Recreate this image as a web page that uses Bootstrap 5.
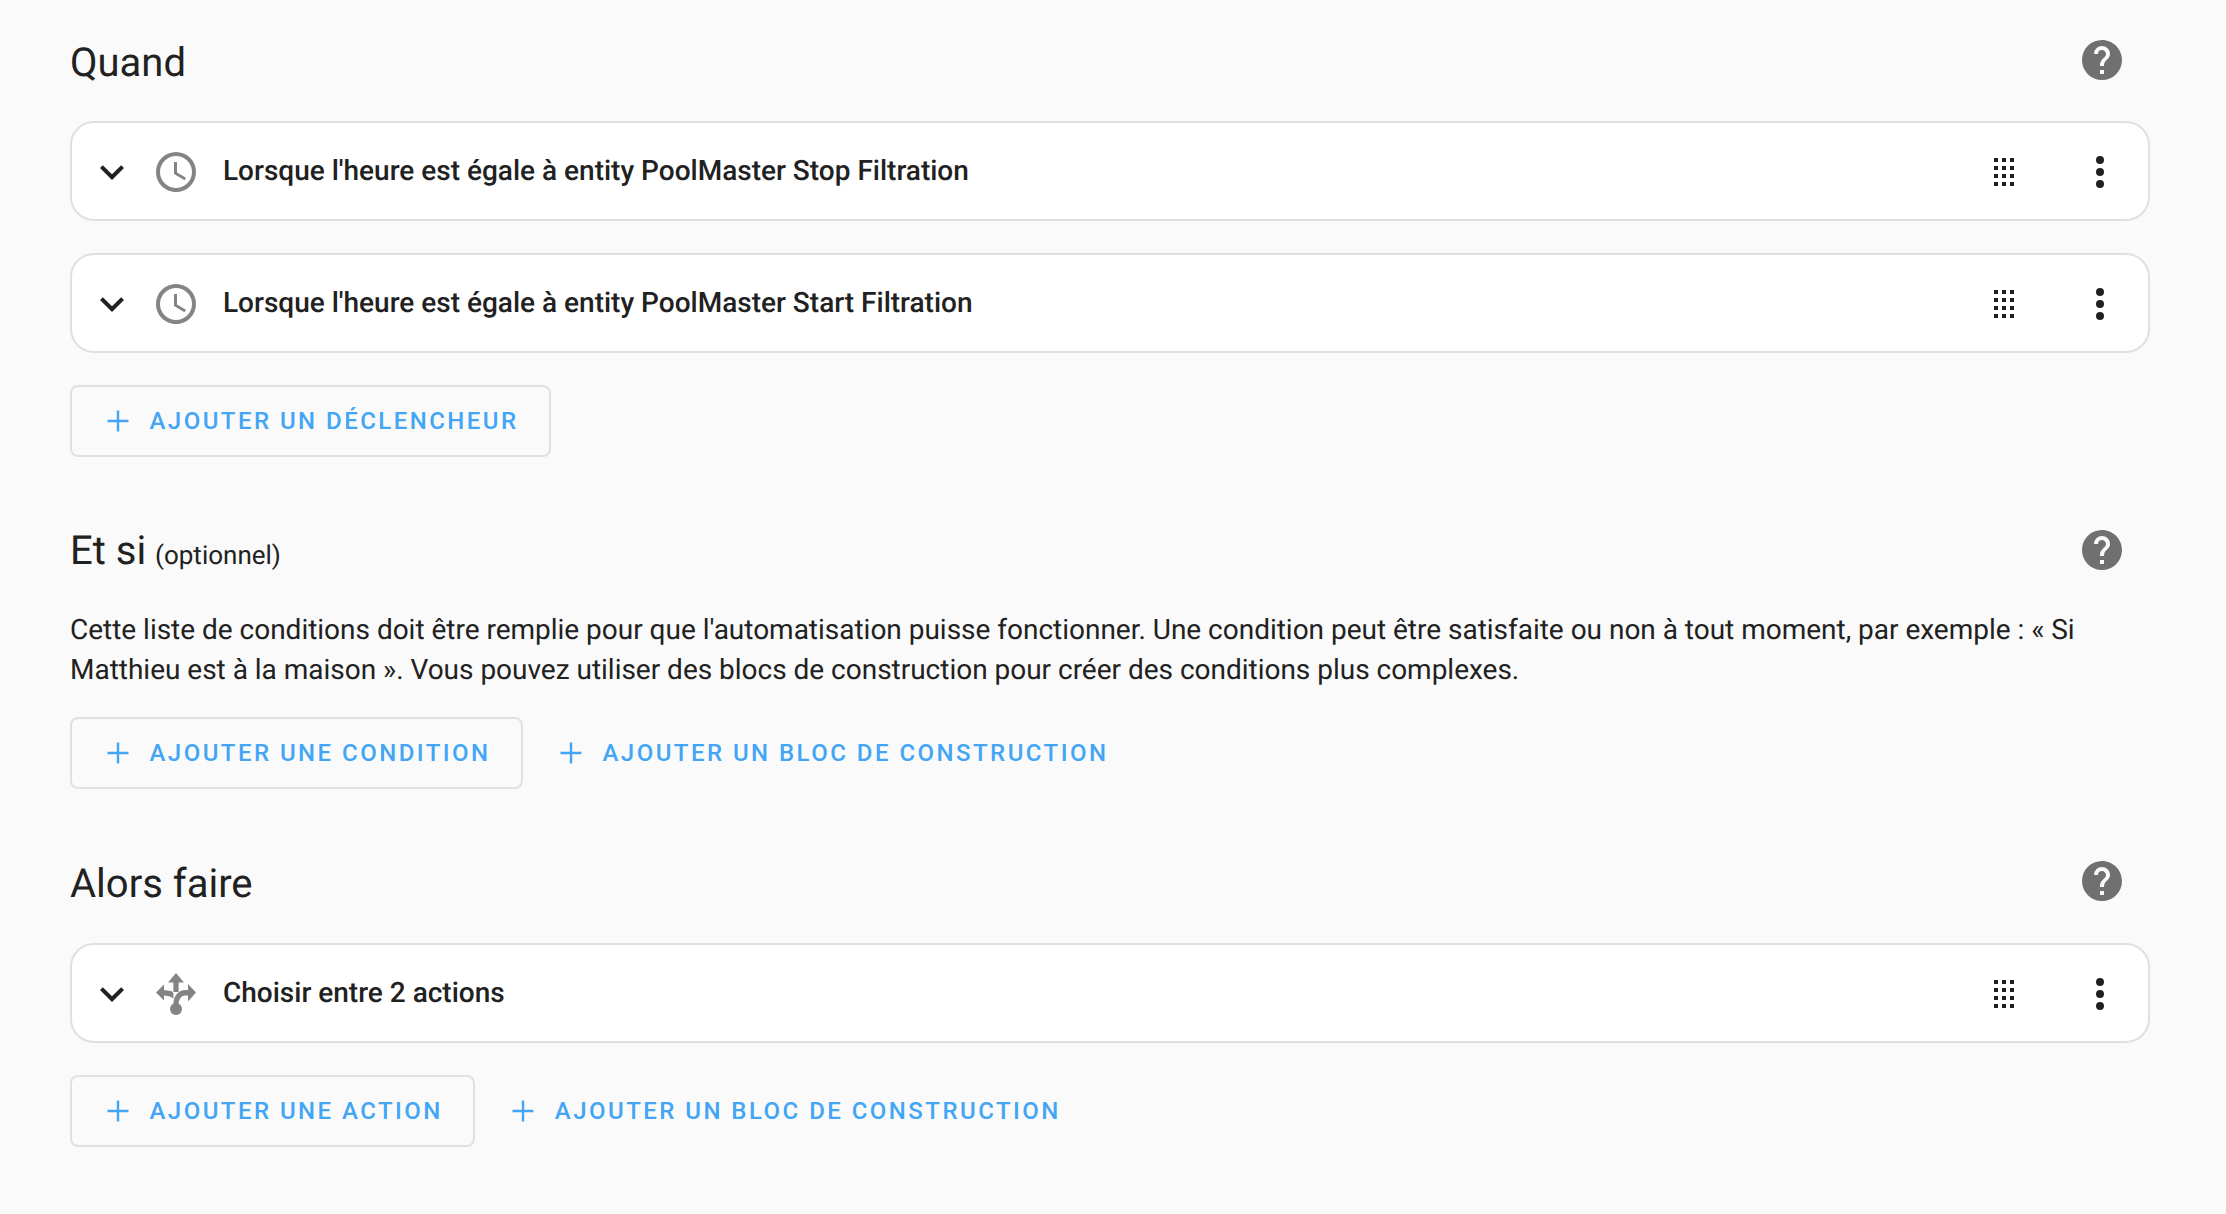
<!DOCTYPE html>
<html lang="fr">
<head>
<meta charset="utf-8">
<title>Automatisation</title>
<link href="https://cdn.jsdelivr.net/npm/bootstrap@5.3.0/dist/css/bootstrap.min.css" rel="stylesheet">
<style>
html, body { height: 100%; }
body { background: #fafafa; color: #212121; font-family: Roboto, "Liberation Sans", sans-serif; overflow: hidden; text-rendering: geometricPrecision; }
.page-wrap { padding: 28px 76px 0 70px; }
.sec-head { height: 64px; padding-right: 24px; }
.sec-title { font-size: 40px; font-weight: 400; line-height: 64px; margin: 6px 0 0; color: #212121; }
.sec-title small { font-size: 26px; font-weight: 400; margin-left: -1px; }
.ico { width: 48px; height: 48px; fill: currentColor; flex: none; display: block; }
.ico-help { color: #707070; }
.ico-grey { color: #848484; }
.auto-card { height: 100px; margin-top: 29px; border: 2px solid #e0e0e0; border-radius: 24px; background: #fff; box-shadow: none; padding: 0 24px 0 16px; }
.auto-card + .auto-card { margin-top: 32px; }
.auto-card .ico { margin-top: 2px; }
.auto-card .row-label { font-size: 28px; font-weight: 500; line-height: 40px; color: #212121; margin-left: 23px; }
.auto-card .ico-state { margin-left: 16px; }
.auto-card .ico-drag { margin-right: 48px; }
.btn-row { margin-top: 32px; gap: 0; }
.act-btn { height: 72px; font-family: inherit; font-size: 24px; font-weight: 500; letter-spacing: 2.46px; color: #42a5f5; text-transform: uppercase; display: inline-flex; align-items: center; background: transparent; border-radius: 8px; line-height: 1; }
.act-btn:hover, .act-btn:active { color: #42a5f5; }
.act-btn svg { width: 36px; height: 36px; fill: currentColor; margin-right: 13.5px; margin-left: 1px; flex: none; }
.act-outline { border: 2px solid #e0e0e0; padding: 0 30.5px 0 27px; }
.act-text { border: 2px solid transparent; padding: 0 30px 0 27px; }
.desc { font-size: 28px; line-height: 40px; margin: 28px 0 0; color: #212121; letter-spacing: -0.015px; }
.gap-sec-2 { margin-top: 61px; }
.gap-sec-3 { margin-top: 60px; }
.gap-sec-3 .auto-card { margin-top: 30px; }
.desc + .btn-row { margin-top: 27px; }
</style>
</head>
<body>
<main class="page-wrap">

  <section>
    <div class="sec-head d-flex align-items-center justify-content-between">
      <h1 class="sec-title">Quand</h1>
      <svg class="ico ico-help" viewBox="0 0 24 24"><path d="M15.07,11.25L14.17,12.17C13.45,12.89 13,13.5 13,15H11V14.5C11,13.39 11.45,12.39 12.17,11.67L13.41,10.41C13.78,10.05 14,9.55 14,9C14,7.89 13.1,7 12,7A2,2 0 0,0 10,9H8A4,4 0 0,1 12,5A4,4 0 0,1 16,9C16,9.88 15.64,10.67 15.07,11.25M13,19H11V17H13M12,2A10,10 0 0,0 2,12A10,10 0 0,0 12,22A10,10 0 0,0 22,12C22,6.47 17.5,2 12,2Z"/></svg>
    </div>
    <div class="card auto-card flex-row align-items-center">
      <svg class="ico" viewBox="0 0 24 24"><path d="M7.41,8.58L12,13.17L16.59,8.58L18,10L12,16L6,10L7.41,8.58Z"/></svg>
      <svg class="ico ico-grey ico-state" viewBox="0 0 24 24"><path d="M12,20A8,8 0 0,0 20,12A8,8 0 0,0 12,4A8,8 0 0,0 4,12A8,8 0 0,0 12,20M12,2A10,10 0 0,1 22,12A10,10 0 0,1 12,22C6.47,22 2,17.5 2,12A10,10 0 0,1 12,2M12.5,7V12.25L17,14.92L16.25,16.15L11,13V7H12.5Z"/></svg>
      <div class="row-label flex-grow-1">Lorsque l'heure est égale à entity PoolMaster Stop Filtration</div>
      <svg class="ico ico-drag" viewBox="0 0 24 24"><path d="M7,19V17H9V19H7M11,19V17H13V19H11M15,19V17H17V19H15M7,15V13H9V15H7M11,15V13H13V15H11M15,15V13H17V15H15M7,11V9H9V11H7M11,11V9H13V11H11M15,11V9H17V11H15M7,7V5H9V7H7M11,7V5H13V7H11M15,7V5H17V7H15Z"/></svg>
      <svg class="ico" viewBox="0 0 24 24"><path d="M12,16A2,2 0 0,1 14,18A2,2 0 0,1 12,20A2,2 0 0,1 10,18A2,2 0 0,1 12,16M12,10A2,2 0 0,1 14,12A2,2 0 0,1 12,14A2,2 0 0,1 10,12A2,2 0 0,1 12,10M12,4A2,2 0 0,1 14,6A2,2 0 0,1 12,8A2,2 0 0,1 10,6A2,2 0 0,1 12,4Z"/></svg>
    </div>
    <div class="card auto-card flex-row align-items-center">
      <svg class="ico" viewBox="0 0 24 24"><path d="M7.41,8.58L12,13.17L16.59,8.58L18,10L12,16L6,10L7.41,8.58Z"/></svg>
      <svg class="ico ico-grey ico-state" viewBox="0 0 24 24"><path d="M12,20A8,8 0 0,0 20,12A8,8 0 0,0 12,4A8,8 0 0,0 4,12A8,8 0 0,0 12,20M12,2A10,10 0 0,1 22,12A10,10 0 0,1 12,22C6.47,22 2,17.5 2,12A10,10 0 0,1 12,2M12.5,7V12.25L17,14.92L16.25,16.15L11,13V7H12.5Z"/></svg>
      <div class="row-label flex-grow-1">Lorsque l'heure est égale à entity PoolMaster Start Filtration</div>
      <svg class="ico ico-drag" viewBox="0 0 24 24"><path d="M7,19V17H9V19H7M11,19V17H13V19H11M15,19V17H17V19H15M7,15V13H9V15H7M11,15V13H13V15H11M15,15V13H17V15H15M7,11V9H9V11H7M11,11V9H13V11H11M15,11V9H17V11H15M7,7V5H9V7H7M11,7V5H13V7H11M15,7V5H17V7H15Z"/></svg>
      <svg class="ico" viewBox="0 0 24 24"><path d="M12,16A2,2 0 0,1 14,18A2,2 0 0,1 12,20A2,2 0 0,1 10,18A2,2 0 0,1 12,16M12,10A2,2 0 0,1 14,12A2,2 0 0,1 12,14A2,2 0 0,1 10,12A2,2 0 0,1 12,10M12,4A2,2 0 0,1 14,6A2,2 0 0,1 12,8A2,2 0 0,1 10,6A2,2 0 0,1 12,4Z"/></svg>
    </div>
    <div class="btn-row d-flex">
      <button type="button" class="btn act-btn act-outline"><svg viewBox="0 0 24 24"><path d="M19,12.8H12.8V19H11.2V12.8H5V11.2H11.2V5H12.8V11.2H19V12.8Z"/></svg>Ajouter un déclencheur</button>
    </div>
  </section>

  <section class="gap-sec-2">
    <div class="sec-head d-flex align-items-center justify-content-between">
      <h1 class="sec-title">Et si <small>(optionnel)</small></h1>
      <svg class="ico ico-help" viewBox="0 0 24 24"><path d="M15.07,11.25L14.17,12.17C13.45,12.89 13,13.5 13,15H11V14.5C11,13.39 11.45,12.39 12.17,11.67L13.41,10.41C13.78,10.05 14,9.55 14,9C14,7.89 13.1,7 12,7A2,2 0 0,0 10,9H8A4,4 0 0,1 12,5A4,4 0 0,1 16,9C16,9.88 15.64,10.67 15.07,11.25M13,19H11V17H13M12,2A10,10 0 0,0 2,12A10,10 0 0,0 12,22A10,10 0 0,0 22,12C22,6.47 17.5,2 12,2Z"/></svg>
    </div>
    <p class="desc">Cette liste de conditions doit être remplie pour que l'automatisation puisse fonctionner. Une condition peut être satisfaite ou non à tout moment, par exemple : « Si Matthieu est à la maison ». Vous pouvez utiliser des blocs de construction pour créer des conditions plus complexes.</p>
    <div class="btn-row d-flex">
      <button type="button" class="btn act-btn act-outline"><svg viewBox="0 0 24 24"><path d="M19,12.8H12.8V19H11.2V12.8H5V11.2H11.2V5H12.8V11.2H19V12.8Z"/></svg>Ajouter une condition</button>
      <button type="button" class="btn act-btn act-text"><svg viewBox="0 0 24 24"><path d="M19,12.8H12.8V19H11.2V12.8H5V11.2H11.2V5H12.8V11.2H19V12.8Z"/></svg>Ajouter un bloc de construction</button>
    </div>
  </section>

  <section class="gap-sec-3">
    <div class="sec-head d-flex align-items-center justify-content-between">
      <h1 class="sec-title">Alors faire</h1>
      <svg class="ico ico-help" viewBox="0 0 24 24"><path d="M15.07,11.25L14.17,12.17C13.45,12.89 13,13.5 13,15H11V14.5C11,13.39 11.45,12.39 12.17,11.67L13.41,10.41C13.78,10.05 14,9.55 14,9C14,7.89 13.1,7 12,7A2,2 0 0,0 10,9H8A4,4 0 0,1 12,5A4,4 0 0,1 16,9C16,9.88 15.64,10.67 15.07,11.25M13,19H11V17H13M12,2A10,10 0 0,0 2,12A10,10 0 0,0 12,22A10,10 0 0,0 22,12C22,6.47 17.5,2 12,2Z"/></svg>
    </div>
    <div class="card auto-card flex-row align-items-center">
      <svg class="ico" viewBox="0 0 24 24"><path d="M7.41,8.58L12,13.17L16.59,8.58L18,10L12,16L6,10L7.41,8.58Z"/></svg>
      <svg class="ico ico-grey ico-state" viewBox="0 0 24 24">
        <circle cx="12" cy="19.5" r="3"/>
        <path d="M12,1.5L16,6.2H13.3V11H10.7V6.2H8Z"/>
        <path d="M22,11.3L18,7V10H16.5C13.5,10 10.7,12.8 10.7,17H13.3C13.3,14.5 15,12.8 16.5,12.8H18V15.8Z"/>
        <path d="M2,11.3L6,7.3V10L9.4,10.5C10,10.7 10.5,11.1 10.7,11.6V14.4C9.8,13.4 8.5,13 6,12.8V15.3Z"/>
      </svg>
      <div class="row-label flex-grow-1">Choisir entre 2 actions</div>
      <svg class="ico ico-drag" viewBox="0 0 24 24"><path d="M7,19V17H9V19H7M11,19V17H13V19H11M15,19V17H17V19H15M7,15V13H9V15H7M11,15V13H13V15H11M15,15V13H17V15H15M7,11V9H9V11H7M11,11V9H13V11H11M15,11V9H17V11H15M7,7V5H9V7H7M11,7V5H13V7H11M15,7V5H17V7H15Z"/></svg>
      <svg class="ico" viewBox="0 0 24 24"><path d="M12,16A2,2 0 0,1 14,18A2,2 0 0,1 12,20A2,2 0 0,1 10,18A2,2 0 0,1 12,16M12,10A2,2 0 0,1 14,12A2,2 0 0,1 12,14A2,2 0 0,1 10,12A2,2 0 0,1 12,10M12,4A2,2 0 0,1 14,6A2,2 0 0,1 12,8A2,2 0 0,1 10,6A2,2 0 0,1 12,4Z"/></svg>
    </div>
    <div class="btn-row d-flex">
      <button type="button" class="btn act-btn act-outline"><svg viewBox="0 0 24 24"><path d="M19,12.8H12.8V19H11.2V12.8H5V11.2H11.2V5H12.8V11.2H19V12.8Z"/></svg>Ajouter une action</button>
      <button type="button" class="btn act-btn act-text"><svg viewBox="0 0 24 24"><path d="M19,12.8H12.8V19H11.2V12.8H5V11.2H11.2V5H12.8V11.2H19V12.8Z"/></svg>Ajouter un bloc de construction</button>
    </div>
  </section>

</main>
<script src="https://cdn.jsdelivr.net/npm/bootstrap@5.3.0/dist/js/bootstrap.bundle.min.js"></script>
</body>
</html>
